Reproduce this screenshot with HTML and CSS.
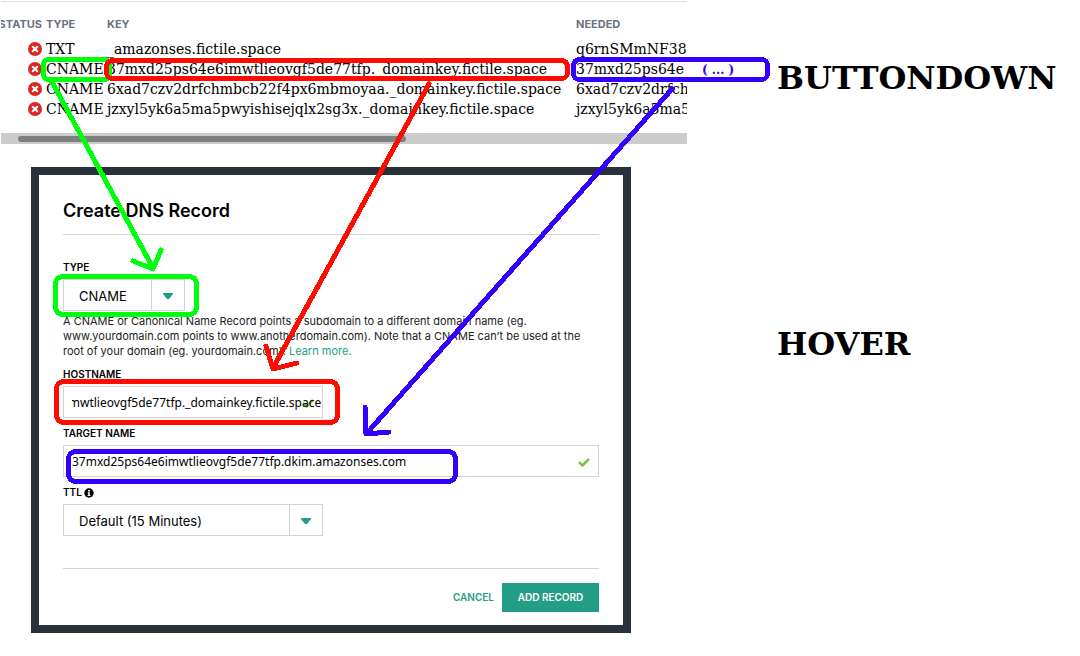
FILE: index.html
```html
<!DOCTYPE html>
<html lang="en">
<head>
<meta charset="utf-8">
<title>DNS record setup</title>
<link rel="stylesheet" href="styles.css">
</head>
<body>
<svg class="defs" width="0" height="0" aria-hidden="true">
  <symbol id="fail" viewBox="0 0 14 14">
    <circle cx="7" cy="7" r="7" fill="#dc2626"/>
    <path d="M4.7 4.7l4.6 4.6M9.3 4.7L4.7 9.3" stroke="#fff" stroke-width="2" stroke-linecap="round"/>
  </symbol>
  <symbol id="caret" viewBox="0 0 10 6">
    <path d="M0 0h10v1L6 6H4L0 1z" fill="#229e86"/>
  </symbol>
  <symbol id="check" viewBox="0 0 12 9">
    <path d="M1 4l3.500 3.500L11 1" fill="none" stroke="#7cc142" stroke-width="2.500"/>
  </symbol>
</svg>
<main class="page">
  <section class="panel">
    <table class="records">
      <colgroup><col class="col-status"><col class="col-type"><col class="col-key"><col></colgroup>
      <thead>
        <tr><th class="status">STATUS</th><th>TYPE</th><th>KEY</th><th>NEEDED</th></tr>
      </thead>
      <tbody>
        <tr><td class="status"><svg class="fail"><use href="#fail"/></svg></td><td>TXT</td><td>_amazonses.fictile.space</td><td>q6rnSMmNF38</td></tr>
        <tr><td class="status"><svg class="fail"><use href="#fail"/></svg></td><td>CNAME</td><td>37mxd25ps64e6imwtlieovgf5de77tfp._domainkey.fictile.space</td><td>37mxd25ps64e</td></tr>
        <tr><td class="status"><svg class="fail"><use href="#fail"/></svg></td><td>CNAME</td><td>6xad7czv2drfchmbcb22f4px6mbmoyaa._domainkey.fictile.space</td><td>6xad7czv2drfch</td></tr>
        <tr><td class="status"><svg class="fail"><use href="#fail"/></svg></td><td>CNAME</td><td>jzxyl5yk6a5ma5pwyishisejqlx2sg3x._domainkey.fictile.space</td><td>jzxyl5yk6a5ma5</td></tr>
      </tbody>
    </table>
    <div class="track"><div class="thumb"></div></div>
  </section>
  <h2 class="note note-top">BUTTONDOWN</h2>

  <form class="dialog">
    <h1 class="title">Create DNS Record</h1>
    <div class="fields">
      <label class="label" for="type">TYPE</label>
      <div class="select select-small">
        <select id="type"><option>CNAME</option></select>
        <span class="arrow"><svg class="caret"><use href="#caret"/></svg></span>
      </div>
      <p class="help">A CNAME or Canonical Name Record points a subdomain to a different domain name (eg. www.yourdomain.com points to www.anotherdomain.com). Note that a CNAME can’t be used at the root of your domain (eg. yourdomain.com). <a href="#">Learn more.</a></p>
      <label class="label" for="hostname">HOSTNAME</label>
      <div class="text text-short">
        <svg class="check"><use href="#check"/></svg>
        <input id="hostname" type="text" value="37mxd25ps64e6imwtlieovgf5de77tfp._domainkey.fictile.space">
      </div>
      <label class="label" for="target">TARGET NAME</label>
      <div class="text">
        <svg class="check"><use href="#check"/></svg>
        <input id="target" type="text" value="37mxd25ps64e6imwtlieovgf5de77tfp.dkim.amazonses.com">
      </div>
      <label class="label" for="ttl">TTL
        <svg class="info" viewBox="0 0 10 10"><circle cx="5" cy="5" r="4.7" fill="#000"/><path d="M4.1 2h1.8v1.5H4.1zM3.6 4.2h2.2v2.7h.7v1h-3v-1h.7V5.2h-.6z" fill="#fff"/></svg>
      </label>
      <div class="select">
        <select id="ttl"><option>Default (15 Minutes)</option></select>
        <span class="arrow"><svg class="caret"><use href="#caret"/></svg></span>
      </div>
    </div>
    <div class="actions">
      <button class="cancel" type="button">CANCEL</button>
      <button class="add" type="button">ADD RECORD</button>
    </div>
  </form>
  <h2 class="note note-bottom">HOVER</h2>
</main>

<svg class="marks" width="1080" height="656" viewBox="0 0 1080 656">
  <g class="mark green">
    <rect x="43.500" y="59.500" width="66" height="20" rx="5"/>
    <rect x="55.500" y="276.500" width="141" height="38" rx="7"/>
    <path d="M52 82L153 268M133 261L153 269L161 250"/>
  </g>
  <g class="mark red">
    <rect x="106.500" y="60.500" width="461" height="18" rx="6"/>
    <rect x="56.500" y="381.500" width="281" height="41" rx="7"/>
    <path d="M429 84L273 368M266 346L273 369L297 363"/>
  </g>
  <g class="mark blue">
    <rect x="573.500" y="59.500" width="194" height="20" rx="6"/>
    <rect x="68.500" y="451.500" width="387" height="30" rx="7"/>
    <path d="M672 89L367 433M365 407L366 434L389 432"/>
  </g>
  <text class="ellipsis" x="702" y="74">( ... )</text>
</svg>
<script src="script.js"></script>
</body>
</html>
```
FILE: styles.css
```css
* { box-sizing: border-box; }
body {
  margin: 0;
  background: #fff;
  color: #000;
  font-family: Inter, "Liberation Sans", sans-serif;
}
.defs { position: absolute; }
.page {
  display: grid;
  grid-template-columns: minmax(0, 1fr) 303px;
  align-items: start;
}
.panel {
  margin: 1px 90px 0 1px;
  border-top: 1px solid #ddd;
  overflow: hidden;
}
.records {
  width: 100%;
  margin: 10px 0 14px -11px;
  table-layout: fixed;
  border-collapse: collapse;
  white-space: nowrap;
  font: 14px/20px "DejaVu Serif", serif;
}
.col-status { width: 56px; }
.col-type { width: 61px; }
.col-key { width: 469px; }
.records th, .records td { padding: 0; text-align: left; height: 20px; }
.records th {
  height: 27px;
  padding-bottom: 3px;
  color: #6b7280;
  font: 700 11px/24px Inter, sans-serif;
}
.records .status { padding-right: 4px; text-align: right; }
.fail { display: block; width: 14px; height: 14px; margin-left: auto; }
.track { height: 11px; padding: 3px 0 3px 17px; background: #ccc; }
.thumb { width: 58%; height: 6px; border-radius: 3px; background: #7d8080; }
.note {
  margin: 0;
  font: bold 32px/38px "DejaVu Serif", serif;
}
.note-top { padding-top: 59px; }
.note-bottom { padding-top: 181px; }

.dialog {
  max-width: 600px;
  margin: 23px 0 23px 31px;
  padding: 24px 24px 13px;
  border: 8px solid #283039;
}
.title {
  margin: 0;
  padding-bottom: 11px;
  border-bottom: 1px solid #d3d3d3;
  font-size: 18px;
  line-height: 24px;
  font-weight: 600;
}
.fields { padding: 17px 0 32px; }
.label {
  display: flex;
  align-items: center;
  gap: 2px;
  margin: 9px 0 5px;
  font-size: 10px;
  line-height: 13px;
  font-weight: 600;
}
.info { width: 10px; height: 10px; }
.select, .text {
  display: flex;
  position: relative;
  height: 32px;
  border: 1px solid #d3d3d3;
}
.select { max-width: 260px; }
.select-small { max-width: 122px; }
.text-short { max-width: 260px; }
.select select {
  flex: 1;
  min-width: 0;
  padding: 2px 0 0 15px;
  border: 0;
  appearance: none;
  background: none;
  color: #000;
  font: 13px/28px Inter, sans-serif;
}
.arrow {
  display: flex;
  align-items: center;
  justify-content: center;
  width: 33px;
  padding-top: 2px;
  border-left: 1px solid #d3d3d3;
  pointer-events: none;
}
.caret { width: 10px; height: 6px; }
.text input {
  position: relative;
  width: 100%;
  padding: 1px 1px 0 8px;
  border: 0;
  background: none;
  color: #000;
  font: 12px/28px "Noto Sans", sans-serif;
}
.check { position: absolute; right: 8px; top: 12px; width: 12px; height: 9px; }
.help {
  margin: 3px 0 0;
  color: #222;
  font-size: 11px;
  line-height: 15px;
}
.help a { color: #229e86; text-decoration: none; }
.actions {
  display: flex;
  justify-content: flex-end;
  gap: 8px;
  padding-top: 14px;
  border-top: 1px solid #d3d3d3;
}
.actions button {
  height: 29px;
  padding: 0;
  border: 0;
  font: 600 10px/29px Inter, sans-serif;
}
.actions .cancel { background: none; color: #229e86; }
.actions .add { width: 97px; background: #229e86; color: #fff; }

.marks { position: absolute; left: 0; top: 0; pointer-events: none; }
.mark {
  fill: none;
  stroke-width: 5px;
  stroke-linecap: round;
  stroke-linejoin: round;
  shape-rendering: crispEdges;
}
.green { stroke: #00ff0c; }
.red { stroke: #ff0c00; }
.blue { stroke: #3300ff; }
.ellipsis { fill: #3300ff; font: bold 12px "DejaVu Serif", serif; }
```
FILE: script.js
```js
// Keep the end of a long hostname in view.
const hostname = document.getElementById("hostname");
hostname.scrollLeft = hostname.scrollWidth;
```
